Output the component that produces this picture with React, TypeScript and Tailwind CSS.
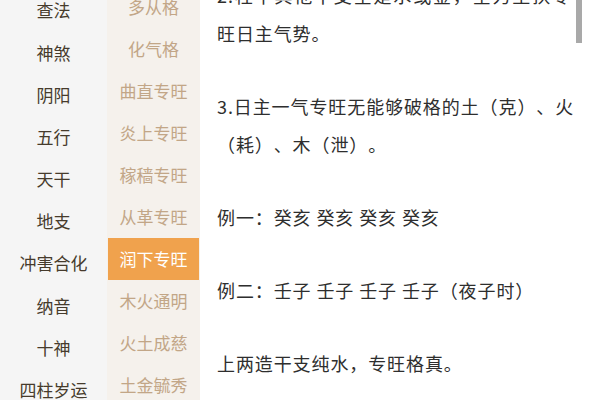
import React from 'react';

const categories = ['查法', '神煞', '阴阳', '五行', '天干', '地支', '冲害合化', '纳音', '十神', '四柱岁运'];
const patterns = ['多从格', '化气格', '曲直专旺', '炎上专旺', '稼穑专旺', '从革专旺', '润下专旺', '木火通明', '火土成慈', '土金毓秀'];
const active = '润下专旺';

// wrapped paragraphs: every line but the last is spread to the full width
const paragraphs: string[][] = [
  ['2.柱中其他干支全是水或金，全力生扶专', '旺日主气势。'],
  ['3.日主一气专旺无能够破格的土（克）、火', '（耗）、木（泄）。'],
  ['例一：癸亥 癸亥 癸亥 癸亥'],
  ['例二：壬子 壬子 壬子 壬子（夜子时）'],
  ['上两造干支纯水，专旺格真。'],
];

function JustifiedLine({ text }: { text: string }) {
  const tokens = text.match(/[0-9.]+|./g) ?? [];
  return (
    <span className="flex justify-between">
      {tokens.map((t, k) => (
        <span key={k}>{t}</span>
      ))}
    </span>
  );
}

export default function App() {
  return (
    <div
      className="relative flex h-[400px] w-[600px] overflow-hidden bg-white [text-spacing-trim:space-all]"
      style={{ fontFamily: '"Noto Sans CJK SC", "Noto Sans", sans-serif' }}
    >
      {/* category column */}
      <div className="w-[107px] shrink-0 bg-[#f5f5f5]">
        <div className="mt-[-11px] flex flex-col">
          {categories.map((c) => (
            <div key={c} className="flex h-[42.2px] items-center justify-center text-[17px] text-[#463b2c]">
              {c}
            </div>
          ))}
        </div>
      </div>

      {/* pattern column */}
      <div className="w-[93px] shrink-0 bg-[#f5f1ec]">
        <div className="mt-[-14px] flex flex-col">
          {patterns.map((p) => (
            <div
              key={p}
              className={
                p === active
                  ? 'mx-[1px] flex h-[42px] items-center justify-center bg-[#f0a24d] text-[17px] text-white'
                  : 'flex h-[42px] items-center justify-center text-[17px] text-[#c2a687]'
              }
            >
              {p}
            </div>
          ))}
        </div>
      </div>

      {/* article */}
      <div className="min-w-0 flex-1 pl-[17px] pr-[29px]">
        <div className="mt-[-24px] flex flex-col gap-[35px]">
          {paragraphs.map((lines, i) => (
            <div key={i} className="whitespace-pre text-[18px] leading-[38px] tracking-[0.9px] text-[#2e2e2e]">
              {lines.map((l, j) =>
                j < lines.length - 1 ? (
                  <JustifiedLine key={j} text={l} />
                ) : (
                  <span key={j} className="block">
                    {l}
                  </span>
                )
              )}
            </div>
          ))}
        </div>
      </div>

      {/* scrollbar thumb */}
      <div className="absolute left-[576px] top-0 h-[43px] w-[6px] bg-[#a9a9a9]" />
    </div>
  );
}
